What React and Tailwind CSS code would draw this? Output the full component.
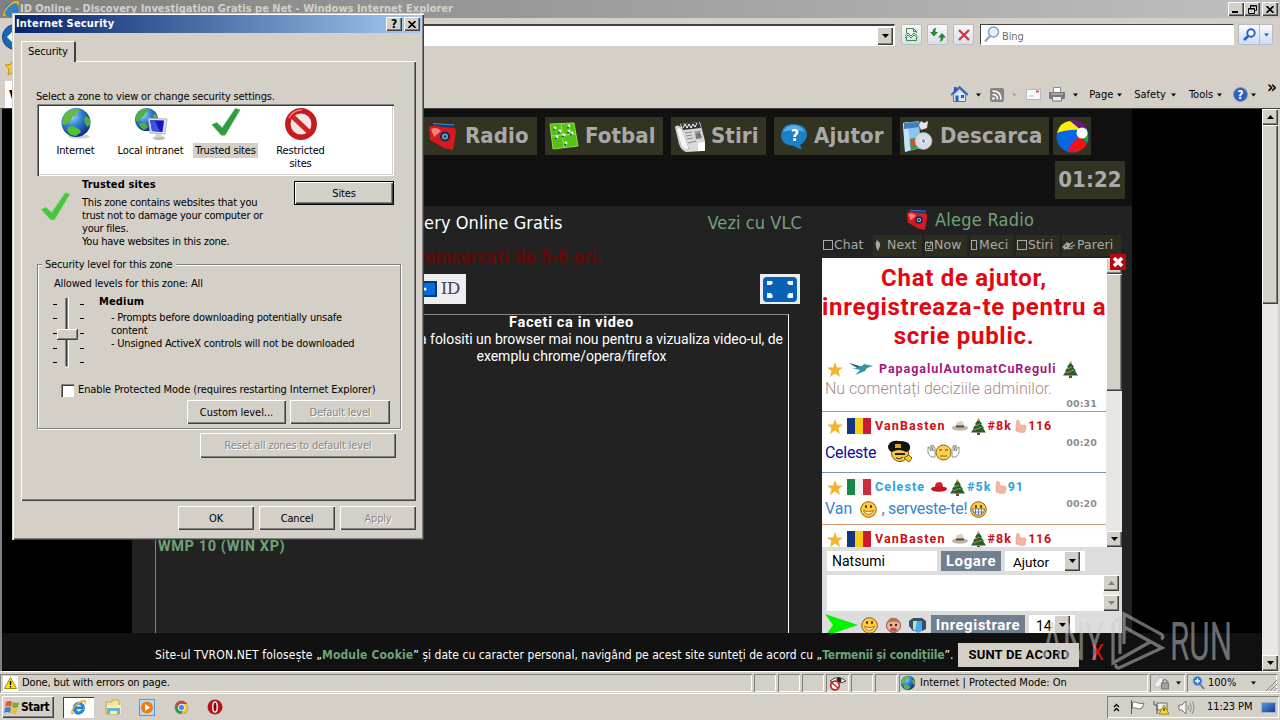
import React from 'react';

const raised = 'bg-[#d4d0c8] shadow-[inset_1px_1px_0_#fff,inset_-1px_-1px_0_#404040,inset_-2px_-2px_0_#808080]';
const sunken = 'shadow-[inset_1px_1px_0_#808080,inset_-1px_-1px_0_#fff]';
const tahoma = "[font-family:'DejaVu_Sans_Condensed','DejaVu_Sans',sans-serif]";
const verdana = "[font-family:'DejaVu_Sans',sans-serif]";
const roboto = "[font-family:Roboto,sans-serif]";

function Caret({ up, className = 'fill-black' }) {
  return (
    <svg width="7" height="4" viewBox="0 0 7 4" className={className}>
      <path d={up ? 'M0 4L3.5 0L7 4Z' : 'M0 0H7L3.5 4Z'} />
    </svg>
  );
}

function ScrollButton({ up, disabled }) {
  return (
    <div className={`w-4 h-4 shrink-0 flex items-center justify-center ${raised}`}>
      <Caret up={up} className={disabled ? 'fill-[#808080]' : 'fill-black'} />
    </div>
  );
}

function GlobeIcon({ size = 32 }) {
  return (
    <svg width={size} height={size} viewBox="0 0 32 32" className="shrink-0">
      <defs>
        <radialGradient id="globe" cx="0.35" cy="0.28" r="0.75">
          <stop offset="0" stopColor="#a5dcf8" />
          <stop offset="0.45" stopColor="#3583d4" />
          <stop offset="1" stopColor="#0d2c86" />
        </radialGradient>
      </defs>
      <ellipse cx="19" cy="29.500" rx="11" ry="2" fill="#d0d0d0" />
      <circle cx="16" cy="15.500" r="14.500" fill="url(#globe)" />
      <path d="M3 11Q5 5 10 3L18 2L20 4L15 6L17 8L12 10L11 14L7 15L6 18L2 17Z" fill="#62bb3f" />
      <path d="M26 9L30 12L30 18L27 20L25 16L24 12Z" fill="#52ad3a" />
      <path d="M8 20L13 19L19 22L21 25L16 29L11 28Q8 26 7 23Z" fill="#52c035" />
    </svg>
  );
}

function IntranetIcon() {
  return (
    <svg width="34" height="34" viewBox="0 0 34 34">
      <circle cx="12.500" cy="12.500" r="11.500" fill="url(#globe)" />
      <path d="M2 9Q5 3 9 2L14 2L15 4L11 6L10 9L6 11L5 14L2 14ZM20 6L24 10L23 13L19 10ZM6 16L11 16L14 20L10 23Q7 21 5 18Z" fill="#55b03a" />
      <ellipse cx="25" cy="31" rx="6" ry="2" fill="#bbb" />
      <path d="M14 11L33 12L31 27L16 26Z" fill="#dcdcee" stroke="#8e8ea8" strokeWidth="0.600" />
      <path d="M16 13L30 13.500L28.500 25L18 24Z" fill="#1717b9" />
      <path d="M16 13L21 13.200L26 25L18 24Z" fill="#3b55e0" />
      <path d="M22 27L27 27L28 30L20 31Z" fill="#d5d5de" />
    </svg>
  );
}

function CheckIcon({ size = 32, light }) {
  return (
    <svg width={size} height={size} viewBox="0 0 32 32" className="shrink-0">
      <path d="M1 19L6 16.500L12 22L26 1.500L31 3L15 30H11Z" fill={light ? '#4bc441' : '#309c40'} stroke={light ? '#96dd8e' : '#62b56b'} strokeWidth="0.800" />
    </svg>
  );
}

function RestrictedIcon() {
  return (
    <svg width="34" height="34" viewBox="0 0 34 34">
      <circle cx="17" cy="17" r="13.200" fill="#f4e4e4" stroke="#c41b1f" strokeWidth="5.500" />
      <path d="M8 9L26 26" stroke="#cf2226" strokeWidth="5" />
      <path d="M5 11Q9 3 18 3" stroke="#ec7a7a" strokeWidth="1.500" fill="none" />
    </svg>
  );
}

function IeIcon({ size = 22 }) {
  return (
    <svg width={size} height={size} viewBox="0 0 22 22" className="shrink-0">
      <path d="M19 14Q16 20 11 20Q4 19.500 4 12Q4.500 4.500 11.500 4Q19 4.500 19 13H8Q8.500 16.500 11.500 16.500Q13.500 16.500 14.500 14ZM8.200 10H15Q14.500 7.200 11.500 7.200Q8.800 7.300 8.200 10Z" fill="#258bd8" stroke="#0d60ac" strokeWidth="0.500" />
      <path d="M3 20Q-1 19 5 10Q13 0 20 1.500Q22 4 19 7.500Q20 4 17.500 3.500Q12 4 6 11Q1 17 5 19Z" fill="#f3c22e" stroke="#c48a0c" strokeWidth="0.300" />
    </svg>
  );
}

/* ---------- browser chrome ---------- */

function TitleBar() {
  return (
    <div className="h-[18px] shrink-0 flex items-center bg-gradient-to-r from-[#808080] to-[#c0c0c0] pl-[2px] pr-[2px]">
      <IeIcon size={18} />
      <span className={`${tahoma} text-[11px] font-bold text-[#d4d0c8] leading-[18px] whitespace-nowrap tracking-[0.01px]`}>
        ID Online - Discovery Investigation Gratis pe Net - Windows Internet Explorer
      </span>
      <div className="ml-auto flex h-[14px]">
        <div className={`w-4 flex items-end justify-center pb-[3px] ${raised}`}>
          <div className="w-[6px] h-[2px] bg-black mr-[2px]" />
        </div>
        <div className={`w-4 flex items-center justify-center ${raised}`}>
          <svg width="9" height="9" viewBox="0 0 9 9" fill="none" stroke="#000">
            <path d="M2.500 3V.5H8.500V5.500H6M2.500 1H8.500M.5 3.500H6.500V8.500H.5ZM.5 4H6.500" />
          </svg>
        </div>
        <div className={`w-4 ml-[2px] flex items-center justify-center ${raised}`}>
          <svg width="8" height="7" viewBox="0 0 8 7" stroke="#000" strokeWidth="1.600"><path d="M0.500 0L7.500 7M7.500 0L.5 7" /></svg>
        </div>
      </div>
    </div>
  );
}

function AddressRow() {
  const button = 'w-[21px] h-[21px] flex items-center justify-center rounded-[2px] border border-[#b9bcc4] bg-gradient-to-b from-[#f7f8fb] to-[#d9dee8]';
  return (
    <div className="h-[36px] shrink-0 flex items-start pt-[6px] pl-[2px]">
      <div className="w-[34px] h-[26px] rounded-full bg-[#1a66b3] border border-[#0b4488] flex items-center pl-1">
        <svg width="16" height="14" viewBox="0 0 16 14" stroke="#fff" strokeWidth="3" fill="none"><path d="M8 1L2 7L8 13M2 7H16" /></svg>
      </div>
      <div className="ml-[4px] w-[855px] h-[22px] flex items-center justify-end bg-white border-t-2 border-l border-t-[#404040] border-l-[#404040] border-b border-r border-b-white border-r-white p-[1px]">
        <div className={`w-4 h-[18px] flex items-center justify-center ${raised}`}><Caret /></div>
      </div>
      <div className="flex gap-[5px] ml-[6px]">
        <div className={button}>
          <svg width="13" height="15" viewBox="0 0 13 15" fill="none" stroke="#3d8b45">
            <path d="M1.500 6V1.500H8.500L11.500 4.500V6M8.500 1.500V4.500H11.500M1.500 10V13.500H11.500V10M0 8.500L3 6L6 9L9 6L12.500 9M0 11L3 8L6 11L9 8L12.500 11" />
          </svg>
        </div>
        <div className={button}>
          <svg width="16" height="14" viewBox="0 0 16 14" fill="#26892b">
            <path d="M6.500 0Q2.500 0 2.500 4H0L4 8.500L8 4H5.500Q5 1.500 6.500 0ZM9.500 14Q13.500 13 13.500 9.500H16L12 5L8 9.500H10.500Q11 12.500 9.500 14Z" />
          </svg>
        </div>
        <div className={button}>
          <svg width="12" height="12" viewBox="0 0 12 12" stroke="#c63d43" strokeWidth="2.400"><path d="M1 1L11 11M11 1L1 11" /></svg>
        </div>
      </div>
      <div className="ml-[6px] w-[254px] h-[21px] flex items-center bg-white border-t border-l border-[#404040] border-r border-b border-r-white border-b-white pl-[3px]">
        <svg width="16" height="17" viewBox="0 0 16 17" fill="#e1f1fb" stroke="#8ca5bd" strokeWidth="1.600">
          <circle cx="9.500" cy="6" r="5" /><path d="M6 10L1 15.500" strokeWidth="2.200" />
        </svg>
        <span className={`${tahoma} text-[11px] text-[#6d6d6d] ml-[2px] pt-[3px] leading-none tracking-[-0.1px]`}>Bing</span>
      </div>
      <div className="ml-[4px] h-[21px] flex rounded-[2px] border border-[#b9bcc4] bg-gradient-to-b from-[#fafbfd] to-[#cfdcf3]">
        <div className="w-[21px] flex items-center justify-center border-r border-[#b9bcc4]">
          <svg width="13" height="13" viewBox="0 0 13 13" fill="#fff" stroke="#2463cf" strokeWidth="2">
            <circle cx="8" cy="5" r="3.700" /><path d="M5.200 8L1 12" strokeWidth="2.600" />
          </svg>
        </div>
        <div className="w-[12px] flex items-center justify-center"><Caret className="fill-[#1f5fae] w-[5px]" /></div>
      </div>
    </div>
  );
}

function FavoritesRow() {
  return (
    <div className="h-[27px] shrink-0 flex items-start pt-[4px] pl-[4px]">
      <svg width="18" height="18" viewBox="0 0 18 18"><path d="M9 1L11.500 6.500L17 7L13 11L14 17L9 14L4 17L5 11L1 7L6.500 6.500Z" fill="#fbc937" stroke="#c58f14" /></svg>
    </div>
  );
}

function CommandBar() {
  return (
    <div className={`h-[27px] shrink-0 flex items-center pl-[5px] pr-[3px] ${tahoma} text-[11px] leading-none text-black`}>
      <div className="w-[22px] h-full bg-white pl-1 pt-1 text-[16px] font-bold leading-6">V</div>
      <div className="ml-auto flex items-center">
        <svg width="17" height="17" viewBox="0 0 17 17">
          <path d="M2.500 8.500V15.500H14.500V8.500L8.500 3Z" fill="#d9e7f8" stroke="#5577a8" />
          <path d="M0 9L8.500 1L17 9" stroke="#3466b0" strokeWidth="1.800" fill="none" />
          <path d="M3 1H5.500V5H3Z" fill="#2a4eb0" /><path d="M4.500 9.500H7.500V15H4.500Z" fill="#2f5ca9" /><path d="M10 9H13V12H10Z" fill="#2f5ca9" />
        </svg>
        <Caret className="fill-black w-[5px] ml-[8px]" />
        <svg width="14" height="14" viewBox="0 0 14 14" className="ml-[9px]">
          <rect width="14" height="14" rx="2" fill="#858585" />
          <path d="M2.500 3Q11 3 11 11.500M2.500 6.500Q7.500 6.500 7.500 11.500" stroke="#fff" strokeWidth="1.600" fill="none" /><circle cx="3.500" cy="10.500" r="1.300" fill="#fff" />
        </svg>
        <Caret className="fill-[#a5a19a] w-[5px] ml-[8px]" />
        <svg width="15" height="11" viewBox="0 0 15 11" className="ml-[9px]">
          <rect x=".5" y=".5" width="14" height="10" fill="#fbfbfb" stroke="#b8b8b8" /><path d="M10 2.500H13" stroke="#d55" strokeWidth="2" /><path d="M3 7H8" stroke="#bbb" />
        </svg>
        <svg width="16" height="15" viewBox="0 0 16 15" className="ml-[8px]">
          <path d="M4.500 5V.5H11.500V5" fill="#fff" stroke="#8a8a8a" /><rect y="5" width="16" height="7" rx="1" fill="#78787c" />
          <path d="M2 7H14" stroke="#d0d0d0" /><path d="M3.500 9.500H12.500V14H3.500Z" fill="#eee" stroke="#777" />
        </svg>
        <Caret className="fill-black w-[5px] ml-[8px]" />
        <span className="ml-[11px]">Page</span><Caret className="fill-black w-[5px] ml-[4px]" />
        <span className="ml-[12px]">Safety</span><Caret className="fill-black w-[5px] ml-[5px]" />
        <span className="ml-[13px]">Tools</span><Caret className="fill-black w-[5px] ml-[4px]" />
        <svg width="15" height="15" viewBox="0 0 15 15" className="ml-[11px]">
          <circle cx="7.500" cy="7.500" r="7" fill="#315fbe" stroke="#8797b5" />
          <text x="7.500" y="12" textAnchor="middle" fontSize="12" fontWeight="bold" fill="#fff">?</text>
        </svg>
        <Caret className="fill-black w-[5px] ml-[3px]" />
        <span className="ml-[11px] mb-[14px] font-bold text-[17px]">»</span>
      </div>
    </div>
  );
}

/* ---------- web page ---------- */

function RadioIcon({ size = 28 }) {
  return (
    <svg width={size} height={size} viewBox="0 0 28 28" className="shrink-0">
      <path d="M3 1L25 2L26 10L4 6Z" fill="#16386e" />
      <path d="M4 1.500L25 3" stroke="#4c87cc" fill="none" />
      <path d="M0 5Q6 2 12 5L26 6L27 10L24 28L15 26L1 18Z" fill="#d61a20" />
      <path d="M2 7Q8 4 12 9L5 15Z" fill="#f7807c" />
      <circle cx="16" cy="14.500" r="5" fill="#18264e" /><circle cx="16" cy="14.500" r="3" fill="#6ea5d4" /><circle cx="16" cy="14.500" r="1.300" fill="#132" />
    </svg>
  );
}

function PitchIcon() {
  return (
    <svg width="30" height="28" viewBox="0 0 30 28" className="shrink-0">
      <path d="M1 2L25 1L29 24L4 27Z" fill="#54c414" stroke="#91dc3f" />
      <path d="M2 14L27 12M12 2L15 26" stroke="#b3ef72" strokeWidth=".8" />
      {[[6, 6], [11, 9], [20, 4], [20, 9], [8, 15], [15, 13], [23, 11], [17, 21]].map(([x, y]) => (
        <g key={`${x}-${y}`}><circle cx={x} cy={y} r="1.400" fill="#fff" /><circle cx={x - 1} cy={y + 1.500} r="1.100" fill="#334f79" /></g>
      ))}
    </svg>
  );
}

function NewsIcon() {
  return (
    <svg width="32" height="31" viewBox="0 0 32 31" className="shrink-0">
      <path d="M1 6Q3 3 7 6L6 3L26 1L31 20L29 30L12 31Q7 29 5 23Z" fill="#d9d9d9" />
      <path d="M2 8Q5 5 8 8L15 28Q10 30 7 24Z" fill="#f4f4f4" stroke="#aaa" strokeWidth=".6" />
      <path d="M7 3L25 1L27 7L9 9Z" fill="#333" />
      <path d="M9 7L11 3L13 7L15 3L17 7L19 3L21 6L23 2" stroke="#fff" fill="none" />
      <path d="M11 12L18 11M12 15L18 14M13 18L19 17M14 22L22 20M20 11L27 10" stroke="#888" />
      <path d="M21 12L26 11L28 17L22 18Z" fill="#777" /><path d="M24 22L31 21V30H24Z" fill="#fff" />
    </svg>
  );
}

function HelpIcon() {
  return (
    <svg width="28" height="27" viewBox="0 0 28 27" className="shrink-0">
      <path d="M14 1Q27 2 27 12Q26 19 20 22L22 26Q16 25 14 23Q1 22 1 12Q2 1 14 1Z" fill="#1c80c8" />
      <path d="M3 9Q6 2 14 2Q22 3 25 9Q14 5 3 9Z" fill="#59aee2" />
      <text x="15" y="18" textAnchor="middle" fontSize="16" fontWeight="bold" fill="#fff">?</text>
    </svg>
  );
}

function SoftwareIcon() {
  return (
    <svg width="30" height="32" viewBox="0 0 30 32" className="shrink-0">
      <path d="M0 3L16 1L18 28L2 32Z" fill="#8dc4ee" /><path d="M0 3L5 2L7 30L2 32Z" fill="#c4e3f8" />
      <path d="M1 3L17 2V7L1 9Z" fill="#3e80bd" /><path d="M7 19L16 17L16 28L8 30Z" fill="#2f984a" /><path d="M7 22L12 19L14 24L8 27Z" fill="#d74a34" />
      <path d="M16 5L18 1L21 3L25 1L24 8L18 10Z" fill="#e5e5e5" />
      <circle cx="20.500" cy="21" r="8.500" fill="#d6dce4" stroke="#9da7b3" strokeWidth=".6" /><circle cx="20.500" cy="21" r="2.400" fill="#809ab0" stroke="#fff" />
    </svg>
  );
}

function BallIcon() {
  return (
    <svg width="33" height="33" viewBox="0 0 33 33">
      <circle cx="16.500" cy="16.500" r="16" fill="#0867e6" />
      <path d="M1 13Q4 2 14 1L25 10Q12 9 1 13Z" fill="#ffee00" />
      <path d="M14 .5Q26 -1 31 9L24 9Z" fill="#77147b" />
      <path d="M30 8Q34 16 31 23L26 16Z" fill="#1cae27" />
      <path d="M25 16L31 24Q25 34 12 32Q14 22 25 16Z" fill="#f01414" />
      <circle cx="26" cy="13" r="5.500" fill="#fff" />
    </svg>
  );
}

const navItems = [
  { label: 'Radio', icon: <RadioIcon />, box: 'w-[118px] mr-[8px] pl-[10px]', gap: 'ml-[8px]' },
  { label: 'Fotbal', icon: <PitchIcon />, box: 'w-[118px] mr-[8px] pl-[4px]', gap: 'ml-[6px]' },
  { label: 'Stiri', icon: <NewsIcon />, box: 'w-[95px] mr-[8px] pl-[3px]', gap: 'ml-[5px]' },
  { label: 'Ajutor', icon: <HelpIcon />, box: 'w-[118px] mr-[8px] pl-[6px]', gap: 'ml-[6px]' },
  { label: 'Descarca', icon: <SoftwareIcon />, box: 'w-[149px] mr-[4px] pl-[3px]', gap: 'ml-[7px]' },
];

function SiteHeader() {
  return (
    <div className={`h-[97px] shrink-0 bg-[#111] pt-[8px] ${tahoma} font-bold text-[22px] tracking-[0.1px] text-[#a9a9a9] leading-none`}>
      <div className="flex justify-end pr-[41px]">
        {navItems.map((item) => (
          <div key={item.label} className={`h-[38px] flex items-center shrink-0 bg-[#333324] ${item.box}`}>
            {item.icon}
            <span className={item.gap}>{item.label}</span>
          </div>
        ))}
        <div className="w-[38px] h-[38px] flex items-center justify-center bg-[#333324]"><BallIcon /></div>
      </div>
      <div className="flex justify-end pr-[7px] mt-[6px]">
        <div className="w-[70px] h-[38px] flex items-center justify-center bg-[#333324] whitespace-nowrap">01:22</div>
      </div>
    </div>
  );
}

function VideoColumn() {
  return (
    <div className="w-[690px] h-full pl-[23px] flex flex-col">
      <div className={`h-[33px] flex items-center justify-end pr-[20px] ${tahoma} text-[18px] tracking-[0.08px]`}>
        <span className="text-white whitespace-nowrap">ID Discovery Online Gratis</span>
        <span className="text-[#70a278] ml-[145px] whitespace-nowrap">Vezi cu VLC</span>
      </div>
      <div className={`h-[35px] flex items-center justify-end pr-[220px] pt-[2px] ${tahoma} font-bold text-[17px] text-[#650808] whitespace-nowrap tracking-[-0.1px]`}>
        Daca nu merge reincercati de 5-6 ori.
      </div>
      <div className="h-[30px] flex items-center pl-[231px] pr-[22px]">
        <div className="w-[80px] h-[30px] bg-[#eee] flex items-center justify-end pr-[6px]">
          <svg width="24" height="16" viewBox="0 0 24 16"><rect x="1" y="1" width="22" height="14" fill="#0b6ddb" stroke="#05377b" strokeWidth="2" /><circle cx="12" cy="8" r="1.500" fill="#fff" /></svg>
          <span className="[font-family:'DejaVu_Serif',serif] text-[17px] text-[#445] ml-[4px] tracking-[-0.5px]">ID</span>
        </div>
        <div className="ml-auto w-[40px] h-[30px] bg-[#e9eef2] flex items-center justify-center">
          <svg width="34" height="25" viewBox="0 0 34 25">
            <rect width="34" height="25" rx="4" fill="#0861b2" />
            <path d="M4 4H9L10 6L8 8L6 8L4 8ZM30 4H25L24 6L26 8H30ZM4 21H9L10 19L8 16H4ZM30 21H25L24 19L26 16H30Z" fill="#e8f6ff" />
          </svg>
        </div>
      </div>
      <div className={`mt-[10px] w-[634px] flex-1 border-t border-l border-[#858585] border-r border-r-white flex flex-col items-end ${roboto} text-white text-[14px] leading-[17px]`}>
        <div className="w-[433px] text-center whitespace-nowrap -mt-px">
          <div className="font-bold text-[14.500px] tracking-[0.65px]">Faceti ca in video</div>
          <div className="flex justify-end pr-[5px] tracking-[-0.03px]">Va rugam sa folositi un browser mai nou pentru a vizualiza video-ul, de</div>
          <div>exemplu chrome/opera/firefox</div>
        </div>
        <div className="mt-[173px] w-full pl-[2px] font-bold text-[14.500px] tracking-[0.6px] text-[#70a278]">WMP 10 (WIN XP)</div>
      </div>
    </div>
  );
}

const tabs = [
  { label: 'Chat', glyph: 'square', box: 'w-[48px]' },
  { label: 'Next', glyph: 'drop', box: 'w-[49px] bg-[#2e2e20]' },
  { label: 'Now', glyph: 'note', box: 'w-[42px] bg-[#2e2e20]' },
  { label: 'Meci', glyph: 'slim', box: 'w-[43px] bg-[#2e2e20]' },
  { label: 'Stiri', glyph: 'square', box: 'w-[43px] bg-[#2e2e20]' },
  { label: 'Pareri', glyph: 'hand', box: 'w-[59px] bg-[#2e2e20]' },
];

const glyphs = {
  square: <svg width="12" height="11" viewBox="0 0 12 11" className="shrink-0"><rect x="1.500" y=".5" width="9" height="9" fill="none" stroke="#a9a9a9" /></svg>,
  drop: <svg width="14" height="11" viewBox="0 0 14 11" className="shrink-0"><path d="M4 0Q8 3 7 6L5 11Q1 5 4 0Z" fill="#a9a9a9" /></svg>,
  note: <svg width="9" height="10" viewBox="0 0 9 10" className="shrink-0"><path d="M.5 1.500H7.500V9.500H.5ZM2 4L4 6L6.500 3M2 7.500H6M2 0V3M6 0V3" fill="none" stroke="#a9a9a9" /></svg>,
  slim: <svg width="9" height="11" viewBox="0 0 9 11" className="shrink-0"><rect x="1.500" y=".5" width="5" height="9" fill="none" stroke="#a9a9a9" /></svg>,
  hand: <svg width="15" height="11" viewBox="0 0 15 11" className="shrink-0"><path d="M1 7L5 3L8 4L6 8L3 9ZM7 5L11 2M8 7L13 5M6 9L11 8" fill="#a9a9a9" stroke="#a9a9a9" strokeWidth="1.100" /><path d="M3 6H5" stroke="#222" /></svg>,
};

function Star() {
  return <svg width="16" height="15" viewBox="0 0 16 15"><path d="M8 0L10 5.500L16 5.500L11.500 9L13 15L8 11.500L3 15L4.500 9L0 5.500H6Z" fill="#f6b32f" /></svg>;
}

function Tree() {
  return (
    <svg width="17" height="17" viewBox="0 0 17 17">
      <path d="M8.500 1L12 6H11L14 10H13L16 14.500H1L4 10H3L6 6H5Z" fill="#285c33" />
      <path d="M5 8L10 6M4 12L12 9" stroke="#91a34b" /><path d="M7 14.500H10V17H7Z" fill="#75462a" /><circle cx="8.500" cy="1.500" r="1.200" fill="#cdb24f" /><circle cx="7" cy="10" r=".8" fill="#d33" />
    </svg>
  );
}

function Thumb() {
  return <svg width="12" height="13" viewBox="0 0 12 13"><path d="M2 0Q5 0 5 5H9.500Q12 6 11 8L10 12Q7 13 4 12L1 11V5Z" fill="#f1b8a0" stroke="#dc9680" strokeWidth=".5" /></svg>;
}

function Hat({ red }) {
  return (
    <svg width="16" height="12" viewBox="0 0 16 12">
      <path d="M4 7Q4 1 7 1.500L9 1Q12 1 12 7Z" fill={red ? '#d0232b' : '#d8cfc2'} /><ellipse cx="8" cy="8" rx="8" ry="2.700" fill={red ? '#c4161f' : '#bfb5a8'} />
      {!red && <path d="M4 5.500H12V7.500H4Z" fill="#59493f" />}
    </svg>
  );
}

function Flag({ colors }) {
  return (
    <div className="w-[24px] h-[16px] flex">
      {colors.map((c) => <div key={c} className={`w-2 h-full ${c}`} />)}
    </div>
  );
}

function Smiley({ grin, size = 17 }) {
  return (
    <svg width={size} height={size} viewBox="0 0 17 17">
      <circle cx="8.500" cy="8.500" r="7.800" fill="#fdcb3d" stroke="#8e6014" />
      <ellipse cx="6" cy="5.500" rx="1" ry="1.500" fill="#3a2b0d" /><ellipse cx="11" cy="5.500" rx="1" ry="1.500" fill="#3a2b0d" />
      {grin
        ? <path d="M2.500 8H14.500Q14 14 8.500 14Q3 14 2.500 8ZM5.500 8V13.500M8.500 8V14M11.500 8V13.500M3 11H14" fill="#fff" stroke="#4b61a3" strokeWidth=".8" />
        : <path d="M3.500 9.500Q8.500 12 13.500 9.500Q12 13.500 8.500 13.500Q5 13.500 3.500 9.500Z" fill="#fff3c8" stroke="#8a4b0e" strokeWidth=".7" />}
    </svg>
  );
}

function HatSmiley() {
  return (
    <svg width="26" height="23" viewBox="0 0 26 23">
      <circle cx="13" cy="13" r="8.500" fill="#f7ca37" stroke="#6f5713" />
      <path d="M8 14H18" stroke="#222" strokeWidth="2" /><path d="M9 18Q13 20 16 17" stroke="#333" fill="none" />
      <path d="M1 6Q3 0 12 1Q22 1 23 6Q24 11 19 12Q12 8 5 12Q1 11 1 6Z" fill="#111" /><path d="M8 4H14V8H8Z" fill="#d7a61c" />
      <path d="M17 18L22 15L25 18L22 22Z" fill="#f7ca37" stroke="#7a5a10" />
    </svg>
  );
}

function HandsSmiley() {
  return (
    <svg width="33" height="17" viewBox="0 0 33 17">
      <circle cx="16.500" cy="8.500" r="7.500" fill="#fbd050" stroke="#8a6015" />
      <path d="M12 6H15M18 6H21" stroke="#443" /><path d="M13 12H20" stroke="#a45b1a" />
      <path d="M1 3V9L4 13H8V4L6 1V7L4 1V7L2 3ZM32 3V9L29 13H25V4L27 1V7L29 1V7L31 3Z" fill="#fff" stroke="#777" strokeWidth=".8" />
    </svg>
  );
}

const romania = ['bg-[#14357f]', 'bg-[#f9cd16]', 'bg-[#cc1a30]'];
const italy = ['bg-[#188748]', 'bg-[#f3f3f3]', 'bg-[#cc2c3c]'];

function UserLine({ flag, name, rank, points, color, red }) {
  return (
    <div className={`flex items-center h-[18px] pl-[5px] ${roboto} font-bold text-[12.500px] tracking-[1.1px] whitespace-nowrap ${color}`}>
      <Star />
      <div className="ml-[4px]"><Flag colors={flag} /></div>
      <span className="ml-[4px]">{name}</span>
      <div className="ml-[6px]"><Hat red={red} /></div>
      <div className="ml-[2px]"><Tree /></div>
      <span className="ml-[1px]">{rank}</span>
      <div className="ml-[3px]"><Thumb /></div>
      <span className="ml-[1px] tracking-[0.800px]">{points}</span>
    </div>
  );
}

function Time({ children }) {
  return <span className={`ml-auto ${verdana} font-bold text-[9.500px] leading-none text-[#8d8d8d] tracking-[0.1px]`}>{children}</span>;
}

function ChatLog() {
  return (
    <div className="h-[289px] shrink-0 flex overflow-hidden">
      <div className={`w-[284px] bg-white ${roboto}`}>
        <div className="pt-[6px] h-[102px] text-center font-bold text-[#e50610] text-[24px] leading-[29px] tracking-[0.7px] whitespace-nowrap">
          <div>Chat de ajutor,</div>
          <div>inregistreaza-te pentru a</div>
          <div>scrie public.</div>
        </div>
        <div className="h-[52px] border-b border-[#9b9b9b]">
          <div className="flex items-center h-[18px] pl-[5px] font-bold text-[12.500px] text-[#a2197c] whitespace-nowrap">
            <Star />
            <svg width="24" height="15" viewBox="0 0 24 15" className="ml-[6px]">
              <path d="M0 1L10 4L13 4L15 2L24 4L18 6L16 9L6 13L11 8L3 6L8 6Z" fill="#3b94ae" /><path d="M0 1L10 4L9 6Z" fill="#215989" /><path d="M13 5L18 4L15 8Z" fill="#4a9652" />
            </svg>
            <span className="ml-[6px] mr-[5px] tracking-[0.95px]">PapagalulAutomatCuReguli</span>
            <Tree />
          </div>
          <div className="pl-[3px] h-[22px] leading-[22px] font-light text-[16px] text-[#ad8888] whitespace-nowrap">Nu comentați deciziile adminilor.</div>
          <div className="flex pr-[9px] -mt-[1px]"><Time>00:31</Time></div>
        </div>
        <div className="h-[61px] pt-[5px] border-b border-[#7895b5]">
          <UserLine flag={romania} name="VanBasten" rank="#8k" points="116" color="text-[#d20c14]" />
          <div className="flex pl-[3px] pr-[9px] text-[16px] text-[#1009a8]">
            <span className="mt-[6px] tracking-[-0.3px]">Celeste</span>
            <div className="ml-[11px] mt-[5px]"><HatSmiley /></div>
            <div className="ml-[14px] mt-[9px]"><HandsSmiley /></div>
            <div className="ml-auto mt-[3px] flex items-start"><Time>00:20</Time></div>
          </div>
        </div>
        <div className="h-[52px] pt-[5px] border-b border-[#d19774]">
          <UserLine flag={italy} name="Celeste" rank="#5k" points="91" color="text-[#29a4df]" red />
          <div className="flex items-center pl-[3px] pr-[9px] text-[16px] text-[#3983cf] h-[26px] whitespace-nowrap">
            <span className="mr-[8px]">Van</span><Smiley /><span className="ml-[4px] mr-[3px] tracking-[-0.28px]">, serveste-te!</span><Smiley grin />
            <div className="ml-auto mb-[10px] flex"><Time>00:20</Time></div>
          </div>
        </div>
        <div className="pt-[5px]">
          <UserLine flag={romania} name="VanBasten" rank="#8k" points="116" color="text-[#d20c14]" />
        </div>
      </div>
      <div className="w-4 flex flex-col bg-[#e9e7e3]">
        <ScrollButton up />
        <div className={`h-[117px] ${raised}`} />
        <div className="mt-auto"><ScrollButton /></div>
      </div>
    </div>
  );
}

function ChatForm() {
  return (
    <div className={`h-[86px] bg-[#ddd] pl-[5px] pt-[4px] overflow-hidden ${roboto}`}>
      <div className="flex h-[20px]">
        <div className="w-[110px] bg-white pl-[5px] text-[14px] leading-[21px]">Natsumi</div>
        <div className="ml-[4px] w-[60px] bg-[#708090] text-white font-bold text-[15px] leading-[20px] text-center tracking-[0.6px]">Logare</div>
        <div className="ml-[4px] w-[80px] bg-white flex items-center pl-[8px] text-[13.500px]">
          <span className="pt-[2px]">Ajutor</span>
          <div className={`ml-auto mr-[5px] w-[16px] h-[20px] flex items-center justify-center ${raised}`}><Caret /></div>
        </div>
      </div>
      <div className="mt-[4px] mr-[3px] h-[36px] bg-white flex justify-end">
        <div className="flex flex-col justify-between bg-[#e9e7e3]"><ScrollButton up disabled /><ScrollButton disabled /></div>
      </div>
      <div className="flex items-start pt-[3px]">
        <svg width="33" height="22" viewBox="0 0 33 22" className="-ml-[2px]"><path d="M0 0L33 11L0 22L8 11Z" fill="#00f400" /></svg>
        <div className="ml-[3px] mt-[3px]"><Smiley /></div>
        <svg width="17" height="17" viewBox="0 0 17 17" className="ml-[7px] mt-[3px]">
          <circle cx="8.500" cy="8.500" r="7" fill="#e9b79a" stroke="#8b4c38" /><path d="M2 6Q4 0 10 1Q14 2 15 6Q8 3 2 6Z" fill="#b5735c" />
          <circle cx="6" cy="8" r="1.200" fill="#422" /><circle cx="11" cy="8" r="1.200" fill="#422" /><ellipse cx="8.500" cy="12.500" rx="3.500" ry="2" fill="#c05552" />
        </svg>
        <svg width="17" height="17" viewBox="0 0 17 17" className="ml-[7px] mt-[3px]">
          <path d="M4 1H13L17 4V12L13 14H4L0 9V4Z" fill="#354f60" /><path d="M4 4H13V14L9 16L4 13Z" fill="#45a9ec" /><path d="M4 4L8 4L6 13H4Z" fill="#b7e4bd" />
        </svg>
        <div className="ml-[5px] mt-[1px] w-[94px] h-[20px] bg-[#708090] text-white font-bold text-[15px] leading-[20px] text-center tracking-[0.5px]">Inregistrare</div>
        <div className="ml-[4px] mt-[1px] w-[46px] h-[20px] bg-white flex items-center pl-[7px] text-[14px] text-black">
          <span className="pt-[2px]">14</span><div className={`ml-auto mr-[5px] w-[16px] h-[20px] flex items-center justify-center ${raised}`}><Caret /></div>
        </div>
      </div>
    </div>
  );
}

function ChatColumn() {
  return (
    <div className="w-[310px] h-full">
      <div className={`h-[29px] flex items-center w-[300px] pl-[85px] pb-[3px] ${tahoma} text-[18px] tracking-[0.25px] text-[#70a278]`}>
        <RadioIcon size={21} /><span className="ml-[7px] whitespace-nowrap">Alege Radio</span>
      </div>
      <div className={`flex h-[23px] ${verdana} text-[12.500px] text-[#a9a9a9]`}>
        {tabs.map((tab) => (
          <div key={tab.label} className={`h-[21px] mr-[3px] flex items-center shrink-0 whitespace-nowrap ${tab.box}`}>
            {glyphs[tab.glyph]}<span className="tracking-[0.1px]">{tab.label}</span>
          </div>
        ))}
      </div>
      <div className="relative w-[300px]">
        <ChatLog />
        <ChatForm />
        <div className="absolute -right-1 -top-1 w-4 h-4 bg-[#b70812] flex items-center justify-center">
          <svg width="10" height="10" viewBox="0 0 10 10" stroke="#fff" strokeWidth="3.400"><path d="M1 1L9 9M9 1L1 9" /></svg>
        </div>
      </div>
    </div>
  );
}

function CookieBar() {
  return (
    <div className={`h-[37px] shrink-0 bg-[#111] flex items-center pl-[153px] text-white text-[12px] whitespace-nowrap pt-[7px] ${tahoma}`}>
      <span className="tracking-[0.17px]">Site-ul TVRON.NET folosește „</span>
      <span className="font-bold text-[#70a278] tracking-[0.15px]">Module Cookie</span>
      <span className="tracking-[0.04px]">” și date cu caracter personal, navigând pe acest site sunteți de acord cu „</span>
      <span className="font-bold text-[#70a278] tracking-[-0.18px]">Termenii și condițiile</span>
      <span>”.</span>
      <div className={`ml-[5px] w-[121px] h-[24px] bg-[#d4d0c8] text-black text-center font-bold leading-[24px] text-[13px] ${roboto} tracking-[0.2px]`}>SUNT DE ACORD</div>
      <span className="ml-[11px] -mt-[4px] text-[#e01010] text-[22px] leading-none">X</span>
    </div>
  );
}

function WebPage() {
  return (
    <div className="h-[563px] shrink-0 flex border-t border-l-2 border-[#808080] border-t-[#404040]">
      <div className="w-[1260px] flex flex-col bg-black">
        <div className="h-[524px] w-[1000px] ml-[130px] flex flex-col bg-[#222]">
          <SiteHeader />
          <div className="flex flex-1">
            <VideoColumn />
            <ChatColumn />
          </div>
        </div>
        <CookieBar />
      </div>
      <div className="w-4 flex flex-col bg-[#e9e7e3]">
        <ScrollButton up />
        <div className={`h-[179px] ${raised}`} />
        <div className="mt-auto"><ScrollButton /></div>
      </div>
    </div>
  );
}

/* ---------- status bar and taskbar ---------- */

function StatusBar() {
  return (
    <div className={`h-[22px] shrink-0 flex items-center gap-[2px] border-t border-white pt-[1px] ${tahoma} text-[11px] text-black whitespace-nowrap`}>
      <div className={`w-[752px] h-[18px] flex items-center pl-[3px] ${sunken}`}>
        <div className="w-[15px] h-[15px] bg-white flex items-center justify-center">
          <svg width="13" height="12" viewBox="0 0 13 12"><path d="M6.500 .5L12.500 11.500H.5Z" fill="#ffe11b" stroke="#a68408" /><path d="M6.500 4V8M6.500 9V10.500" stroke="#000" strokeWidth="1.400" /></svg>
        </div>
        <span className="ml-[4px] tracking-[-0.13px]">Done, but with errors on page.</span>
      </div>
      <div className={`w-[22px] h-[18px] ${sunken}`} />
      <div className={`w-[22px] h-[18px] ${sunken}`} />
      <div className={`w-[22px] h-[18px] ${sunken}`} />
      <div className={`w-[23px] h-[18px] flex items-center justify-center ${sunken}`}>
        <svg width="18" height="16" viewBox="0 0 18 16"><path d="M1 6Q9 -1 17 6Q9 10 1 6Z" fill="#fff" stroke="#444" /><circle cx="10" cy="5" r="2.500" fill="#222" /><circle cx="6" cy="10.500" r="4.300" fill="#fff" stroke="#c82326" strokeWidth="1.700" /><path d="M3 8L9 13" stroke="#c82326" strokeWidth="1.500" /></svg>
      </div>
      <div className={`w-[22px] h-[18px] ${sunken}`} />
      <div className={`w-[22px] h-[18px] ${sunken}`} />
      <div className={`w-[249px] h-[18px] flex items-center pl-[1px] ${sunken}`}>
        <GlobeIcon size={16} /><span className="ml-[4px]">Internet | Protected Mode: On</span>
      </div>
      <div className={`w-[35px] h-[18px] flex items-center justify-center gap-[6px] ${sunken}`}>
        <svg width="16" height="14" viewBox="0 0 16 14"><path d="M0 9L5 2L9 1V8L3 12Z" fill="#eee" stroke="#bbb" /><path d="M9 7V5Q11 2 13 5V7" stroke="#888" strokeWidth="1.500" fill="none" /><rect x="7.500" y="7" width="7" height="6" fill="#a3a3a3" stroke="#777" /></svg>
        <Caret className="fill-black w-[5px]" />
      </div>
      <div className={`w-[90px] h-[18px] flex items-center pl-[5px] ${sunken}`}>
        <svg width="13" height="14" viewBox="0 0 13 14"><path d="M8 8L12 13" stroke="#75767b" strokeWidth="2" /><circle cx="5.500" cy="5" r="4.500" fill="#2c75d5" stroke="#7fa7d8" /><path d="M3 5H8M5.500 2.500V7.500" stroke="#fff" strokeWidth="1.400" /></svg>
        <span className="ml-[3px]">100%</span><Caret className="fill-black w-[5px] ml-[15px]" />
        <svg width="11" height="12" viewBox="0 0 11 12" className="ml-auto mt-[4px]" stroke="#888"><path d="M0 12L11 1M4 12L11 5M8 12L11 9" /></svg>
      </div>
    </div>
  );
}

function Taskbar() {
  return (
    <div className={`h-[27px] shrink-0 flex items-center border-t border-white pl-[2px] pr-[1px] ${tahoma} text-[11px] text-black`}>
      <div className={`w-[52px] h-[22px] flex items-center pl-[2px] ${raised}`}>
        <svg width="16" height="15" viewBox="0 0 16 15"><path d="M2 2Q5 0 8 2L7 7Q4 5 1 7Z" fill="#e55a28" /><path d="M9 2Q12 4 15 2L14 7Q11 9 8 7Z" fill="#76ac35" /><path d="M1 8Q4 6 7 8L6 13Q3 11 0 13Z" fill="#3d7fcd" /><path d="M8 8Q11 10 14 8L13 13Q10 15 7 13Z" fill="#f3bd28" /></svg>
        <span className="ml-[1px] font-bold text-[12px] tracking-[-0.5px]">Start</span>
      </div>
      <div className="ml-[9px] w-[31px] h-[21px] bg-white flex items-center justify-center shadow-[inset_1px_1px_0_#404040]"><IeIcon size={17} /></div>
      <svg width="17" height="17" viewBox="0 0 17 17" className="ml-[11px]"><path d="M1 3H7L8 1H14V15H1Z" fill="#f6e39a" stroke="#c9a94a" /><path d="M2 6H16V15H2Z" fill="#fcefae" /><path d="M2 9H15V15H12V12H5V15H2Z" fill="#65b5e0" /></svg>
      <svg width="17" height="17" viewBox="0 0 17 17" className="ml-[17px]"><rect x=".5" y=".5" width="15" height="16" fill="#b4daf5" stroke="#569ccb" /><circle cx="8" cy="8.500" r="6" fill="#ef7b12" /><path d="M6 5L11 8.500L6 12Z" fill="#fff" /></svg>
      <svg width="15" height="15" viewBox="0 0 15 15" className="ml-[18px]"><circle cx="7.500" cy="7.500" r="6.800" fill="#2e9a4a" /><path d="M1.500 4Q7 -3 13.500 4H7.500L5 9Z" fill="#d94235" /><path d="M13.500 4Q16 12 7 14.500L10 8L9 4Z" fill="#f3c52d" /><circle cx="7.500" cy="7.500" r="3.200" fill="#4688e8" stroke="#fff" /></svg>
      <svg width="16" height="16" viewBox="0 0 16 16" className="ml-[18px]"><circle cx="8" cy="8" r="7.500" fill="#b6141a" /><ellipse cx="8" cy="8" rx="2.200" ry="5" fill="#7b080c" stroke="#eee" strokeWidth="1.500" /></svg>
      <div className={`ml-auto w-[172px] h-[22px] flex items-center pl-[6px] ${sunken}`}>
        <svg width="7" height="9" viewBox="0 0 7 9" fill="none" stroke="#000" strokeWidth="1.300"><path d="M1 4L3.500 1.500L6 4M1 8L3.500 5.500L6 8" /></svg>
        <svg width="15" height="15" viewBox="0 0 15 15" className="ml-[10px]"><path d="M1.500 0V14" stroke="#555" /><path d="M2.500 2.500Q5 1 8 3Q11 4 14 3L12 8Q9 10 6 8L2.500 8Z" fill="#fff" stroke="#777" /></svg>
        <svg width="17" height="15" viewBox="0 0 17 15" className="ml-[8px]"><path d="M4 3H14V10H4Z" fill="#eee" stroke="#666" /><path d="M1 1V5H4V14" stroke="#555" fill="none" /><path d="M11 5L16 14H6Z" fill="#f8dc20" stroke="#9c8416" /><path d="M11 8V11" stroke="#000" /></svg>
        <svg width="17" height="15" viewBox="0 0 17 15" className="ml-[8px]"><path d="M1 5H4L8 1V14L4 10H1Z" fill="#f5f5f5" stroke="#777" /><path d="M10 5Q12 7.500 10 10M12 3Q15 7.500 12 12M14 1Q18 7.500 14 14" stroke="#888" fill="none" /></svg>
        <span className="ml-[12px] whitespace-nowrap tracking-[-0.1px]">11:23 PM</span>
        <div className="ml-auto mr-[3px] w-[15px] h-[11px] bg-gradient-to-br from-[#5b93db] to-[#123f93] border border-[#9cb4d5]" />
      </div>
    </div>
  );
}

/* ---------- dialog ---------- */

function DialogButton({ children, className = '', disabled, focused }) {
  const look = disabled ? 'text-[#858585] [text-shadow:1px_1px_0_#fff]' : 'text-black';
  return (
    <div className={`flex items-center justify-center leading-none whitespace-nowrap ${raised} ${look} ${focused ? 'border border-black' : ''} ${className}`}>
      {children}
    </div>
  );
}

const zones = [
  { label: 'Internet', icon: <GlobeIcon /> },
  { label: 'Local intranet', icon: <IntranetIcon /> },
  { label: 'Trusted sites', icon: <CheckIcon size={30} />, active: true },
  { label: 'Restricted sites', icon: <RestrictedIcon /> },
];

function SecurityLevel() {
  return (
    <div className="relative mt-[15px] ml-[16px] w-[364px] h-[165px] border border-[#808080] shadow-[1px_1px_0_#fff,inset_1px_1px_0_#fff] flex flex-col">
      <span className="absolute -top-[8px] left-[4px] px-[3px] bg-[#d4d0c8] leading-[15px] whitespace-nowrap">Security level for this zone</span>
      <div className="pl-[16px] pt-[11px] leading-[15px]">Allowed levels for this zone: All</div>
      <div className="flex pl-[14px] pt-[4px] h-[90px]">
        <svg width="33" height="78" viewBox="0 0 33 78" className="mt-[1px]">
          {[8, 22, 37, 52, 66].map((y) => <path key={y} d={`M1 ${y}.5H5M28 ${y}.5H32`} stroke="#000" />)}
          <path d="M14.500 2V71" stroke="#404040" strokeWidth="2" /><path d="M16.500 2V71H13" stroke="#fff" fill="none" />
          <rect x="5" y="33" width="21" height="11" fill="#d4d0c8" /><path d="M5.500 43V33.500H25" stroke="#fff" fill="none" /><path d="M5 43.500H25.500V33" stroke="#404040" fill="none" /><path d="M6 42.500H24.500V34" stroke="#808080" fill="none" />
        </svg>
        <div className="ml-[14px] whitespace-nowrap leading-[13px]">
          <div className="font-bold h-[16px] tracking-[0.15px]">Medium</div>
          <div className="pl-[12px] tracking-[-0.21px]">
            <div>- Prompts before downloading potentially unsafe</div>
            <div>content</div>
            <div>- Unsigned ActiveX controls will not be downloaded</div>
          </div>
        </div>
      </div>
      <div className="flex items-center pl-[23px] h-[13px] whitespace-nowrap mt-[3px]">
        <div className="w-[13px] h-[13px] bg-white shadow-[inset_1px_1px_0_#808080,inset_2px_2px_0_#404040,inset_-1px_-1px_0_#fff]" />
        <span className="ml-[4px] tracking-[-0.1px]">Enable Protected Mode (requires restarting Internet Explorer)</span>
      </div>
      <div className="flex justify-end gap-[4px] pr-[10px] mt-[3px]">
        <DialogButton className="w-[99px] h-[24px] tracking-[-0.05px]">Custom level...</DialogButton>
        <DialogButton className="w-[100px] h-[24px] tracking-[-0.15px]" disabled>Default level</DialogButton>
      </div>
    </div>
  );
}

function SecurityDialog() {
  return (
    <div className={`absolute left-[12px] top-[13px] w-[412px] h-[527px] bg-[#d4d0c8] p-[3px] text-[11px] tracking-[-0.16px] text-black ${tahoma} shadow-[inset_1px_1px_0_#d4d0c8,inset_2px_2px_0_#fff,inset_-1px_-1px_0_#404040,inset_-2px_-2px_0_#808080]`}>
      <div className="h-[18px] -mt-[1px] flex items-center bg-gradient-to-r from-[#0a246a] to-[#a6caf0] text-white pl-[1px] pr-[1px]">
        <span className="font-bold whitespace-nowrap tracking-[0.18px]">Internet Security</span>
        <div className={`ml-auto w-4 h-[14px] flex items-center justify-center text-black font-bold text-[12px] leading-none ${raised}`}>?</div>
        <div className={`ml-[2px] w-4 h-[14px] flex items-center justify-center ${raised}`}>
          <svg width="8" height="7" viewBox="0 0 8 7" stroke="#000" strokeWidth="1.600"><path d="M.5 0L7.500 7M7.500 0L.5 7" /></svg>
        </div>
      </div>
      <div className="ml-[6px] mt-[8px] w-[55px] h-[21px] relative z-10 bg-[#d4d0c8] pl-[6px] leading-[20px] tracking-[-0.1px] rounded-t-[2px] border-t border-l border-white border-r-2 border-r-[#404040]">Security</div>
      <div className="ml-[6px] -mt-[1px] w-[395px] h-[440px] shadow-[inset_1px_1px_0_#fff,inset_-1px_-1px_0_#404040,inset_-2px_-2px_0_#808080]">
        <div className="pt-[28px] pl-[15px] leading-[15px] h-[43px] whitespace-nowrap">Select a zone to view or change security settings.</div>
        <div className="ml-[16px] w-[357px] h-[72px] bg-white flex pt-[4px] pl-[1px] shadow-[inset_1px_1px_0_#808080,inset_2px_2px_0_#404040,inset_-1px_-1px_0_#fff,inset_-2px_-2px_0_#d4d0c8]">
          {zones.map((zone) => (
            <div key={zone.label} className="w-[75px] flex flex-col items-center text-center leading-[13px]">
              <div className="h-[35px] flex items-start -mt-px mb-px">{zone.icon}</div>
              <span className={zone.active ? 'bg-[#d4d0c8] px-[2px] py-[1px] whitespace-nowrap' : 'py-[1px] max-w-[70px]'}>{zone.label}</span>
            </div>
          ))}
        </div>
        <div className="flex ml-[16px] w-[357px] h-[73px]">
          <div className="w-[45px] pt-[15px] pl-[3px]"><CheckIcon light size={31} /></div>
          <div className="whitespace-nowrap leading-[13px] pt-[2px] tracking-[-0.22px]">
            <div className="font-bold h-[18px] tracking-[0.15px]">Trusted sites</div>
            <div>This zone contains websites that you</div>
            <div>trust not to damage your computer or</div>
            <div>your files.</div>
            <div>You have websites in this zone.</div>
          </div>
          <DialogButton className="ml-auto mt-[5px] w-[100px] h-[24px]" focused>Sites</DialogButton>
        </div>
        <SecurityLevel />
        <div className="flex justify-end pr-[20px] mt-[4px]">
          <DialogButton className="w-[196px] h-[25px]" disabled>Reset all zones to default level</DialogButton>
        </div>
      </div>
      <div className="flex justify-end gap-[5px] pr-[5px] mt-[5px]">
        <DialogButton className="w-[76px] h-[24px]">OK</DialogButton>
        <DialogButton className="w-[76px] h-[24px]">Cancel</DialogButton>
        <DialogButton className="w-[76px] h-[24px]" disabled>Apply</DialogButton>
      </div>
    </div>
  );
}

function Watermark() {
  return (
    <svg width="200" height="66" viewBox="0 0 200 66" className={`absolute left-[1037px] top-[608px] opacity-50 ${roboto}`} fill="#cfcfcf">
      <text x="5" y="52" fontSize="53" textLength="62" lengthAdjust="spacingAndGlyphs">ANY</text>
      <path d="M83 46V14Q83 10 79 12Q76 14 76 19V55L113 34M87 36V6L124 26Q128 29 124 31M87 19L125 40L82 60Q78 60 79 56" fill="none" stroke="#cfcfcf" strokeWidth="3.200" />
      <text x="133" y="52" fontSize="53" textLength="62" lengthAdjust="spacingAndGlyphs">RUN</text>
    </svg>
  );
}

export default function App() {
  return (
    <div className="relative w-[1280px] h-[720px] flex flex-col bg-[#d4d0c8] overflow-hidden">
      <TitleBar />
      <AddressRow />
      <FavoritesRow />
      <CommandBar />
      <WebPage />
      <StatusBar />
      <Taskbar />
      <SecurityDialog />
      <Watermark />
    </div>
  );
}
